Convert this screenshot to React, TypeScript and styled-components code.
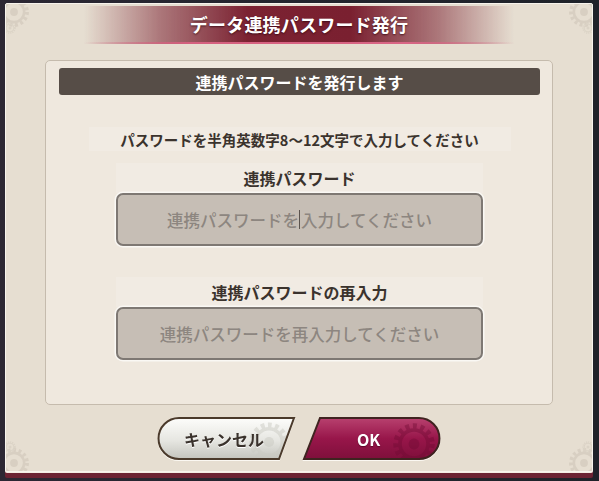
import { ReactElement } from 'react';
import styled, { createGlobalStyle } from 'styled-components';

const GlobalStyle = createGlobalStyle`
    html, body {
        margin: 0;
        padding: 0;
        background: #23252d;
        overflow: hidden;
    }
    body {
        font-family: 'Noto Sans CJK JP', 'Noto Sans', sans-serif;
    }
`;

// gear drawn as a dashed ring (teeth) + rim + hub
const Gear = ({ x, y, r, color }: { x: number; y: number; r: number; color: string }): ReactElement => (
    <g transform={`translate(${x} ${y})`}>
        <circle r={r} fill="none" stroke={color} strokeWidth={r * 0.3} strokeDasharray={`${r * 0.22} ${r * 0.2}`} />
        <circle r={r * 0.78} fill="none" stroke={color} strokeWidth={r * 0.2} />
        <circle r={r * 0.3} fill={color} />
    </g>
);

const CornerGear = ({ corner }: { corner: 'tl' | 'tr' | 'bl' | 'br' }): ReactElement => (
    <Corner $corner={corner} width="40" height="40" viewBox="0 0 40 40">
        <Gear x={corner.includes('l') ? 8 : 32} y={corner.includes('t') ? 8 : 32} r={13} color="#d8cfc2" />
        <Gear x={corner.includes('l') ? 4 : 36} y={corner.includes('t') ? 24 : 16} r={5} color="#dbd3c6" />
    </Corner>
);

const CancelShape = (): ReactElement => (
    <ButtonArt width="139" height="45" viewBox="0 0 139 45">
        <defs>
            <linearGradient id="cancelFill" x1="0" y1="0" x2="0" y2="1">
                <stop offset="0" stopColor="#fdfdfb" />
                <stop offset="0.55" stopColor="#e6e6e1" />
                <stop offset="1" stopColor="#c4c4bd" />
            </linearGradient>
            <clipPath id="cancelClip">
                <path d="M22 2 H137 L122 43 H22 A20.5 20.5 0 0 1 22 2 Z" />
            </clipPath>
        </defs>
        <path d="M22 2 H137 L122 43 H22 A20.5 20.5 0 0 1 22 2 Z" fill="url(#cancelFill)" />
        <g clipPath="url(#cancelClip)" opacity="0.5">
            <Gear x={112} y={26} r={17} color="#c9c9c2" />
        </g>
        <path d="M22 2 H137 L122 43 H22 A20.5 20.5 0 0 1 22 2 Z" fill="none" stroke="#4b3a2b" strokeWidth="2" />
    </ButtonArt>
);

const OkShape = (): ReactElement => (
    <ButtonArt width="139" height="45" viewBox="0 0 139 45">
        <defs>
            <linearGradient id="okFill" x1="0" y1="0" x2="0" y2="1">
                <stop offset="0" stopColor="#b8416f" />
                <stop offset="0.5" stopColor="#98164a" />
                <stop offset="1" stopColor="#7f0f3b" />
            </linearGradient>
            <clipPath id="okClip">
                <path d="M18 2 H117 A20.5 20.5 0 0 1 117 43 H2 Z" />
            </clipPath>
        </defs>
        <path d="M18 2 H117 A20.5 20.5 0 0 1 117 43 H2 Z" fill="url(#okFill)" />
        <g clipPath="url(#okClip)" opacity="0.4">
            <Gear x={112} y={28} r={18} color="#6e0a33" />
        </g>
        <path d="M18 2 H117 A20.5 20.5 0 0 1 117 43 H2 Z" fill="none" stroke="#3f2320" strokeWidth="2" />
    </ButtonArt>
);

const App = (): ReactElement => (
    <Stage>
        <GlobalStyle />
        <Dialog>
            <CornerGear corner="tl" />
            <CornerGear corner="tr" />
            <CornerGear corner="bl" />
            <CornerGear corner="br" />
            <TitleBanner>データ連携パスワード発行</TitleBanner>
            <Panel>
                <HeaderBar>連携パスワードを発行します</HeaderBar>
                <Instruction>パスワードを半角英数字8〜12文字で入力してください</Instruction>
                <Label>連携パスワード</Label>
                <Field>
                    連携パスワードを
                    <Caret />
                    入力してください
                </Field>
                <Label $gap={31}>連携パスワードの再入力</Label>
                <Field>連携パスワードを再入力してください</Field>
            </Panel>
            <Buttons>
                <Button $variant="cancel">
                    <CancelShape />
                    <ButtonText $variant="cancel">キャンセル</ButtonText>
                </Button>
                <Button $variant="ok">
                    <OkShape />
                    <ButtonText $variant="ok">OK</ButtonText>
                </Button>
            </Buttons>
        </Dialog>
    </Stage>
);

const Stage = styled.div`
    width: 599px;
    height: 481px;
    box-sizing: border-box;
    padding: 3px 6px 0 5px;
    background: linear-gradient(90deg, #2c2733 0%, #23252e 50%, #1f2229 100%);
`;

const Dialog = styled.div`
    position: relative;
    display: flex;
    flex-direction: column;
    align-items: center;
    box-sizing: border-box;
    width: 588px;
    height: 469px;
    background: #e6ded1;
    border: 1px solid #f7f3ec;
    border-radius: 2px;
    box-shadow: 0 1px 0 #f3ede3, 0 6px 0 #6c2333;
    overflow: hidden;
`;

const Corner = styled.svg<{ $corner: 'tl' | 'tr' | 'bl' | 'br' }>`
    position: absolute;
    ${(p) => (p.$corner.includes('t') ? 'top: 0;' : 'bottom: 0;')}
    ${(p) => (p.$corner.includes('l') ? 'left: 0;' : 'right: 0;')}
`;

const TitleBanner = styled.div`
    position: relative;
    display: flex;
    align-items: center;
    justify-content: center;
    width: 430px;
    height: 36px;
    margin-top: 2px;
    color: #fff;
    font-size: 18px;
    font-weight: 700;
    letter-spacing: 0.2px;
    text-shadow: 0 1px 2px rgba(40, 0, 10, 0.7);
    background: linear-gradient(
        90deg,
        rgba(122, 31, 48, 0) 0%,
        rgba(122, 31, 48, 0.55) 18%,
        #7b2232 38%,
        #7a2030 62%,
        rgba(122, 31, 48, 0.55) 82%,
        rgba(122, 31, 48, 0) 100%
    );
    border-bottom: 2px solid transparent;
    border-image: linear-gradient(
            90deg,
            rgba(214, 92, 126, 0) 0%,
            #d5607f 25%,
            #d96585 75%,
            rgba(214, 92, 126, 0) 100%
        )
        1;
`;

const Panel = styled.div`
    display: flex;
    flex-direction: column;
    align-items: center;
    box-sizing: border-box;
    width: 508px;
    height: 345px;
    margin-top: 16px;
    padding: 7px 12px 0 13px;
    background: #efe8de;
    border: 1px solid #c5bbad;
    border-radius: 5px;
`;

const HeaderBar = styled.div`
    align-self: stretch;
    display: flex;
    align-items: center;
    justify-content: center;
    height: 27px;
    background: #564d47;
    border-radius: 3px;
    color: #fff;
    font-size: 16px;
    font-weight: 700;
`;

const Instruction = styled.div`
    display: flex;
    align-items: center;
    justify-content: center;
    width: 422px;
    height: 24px;
    margin-top: 32px;
    background: #f1ebe3;
    color: #3b332d;
    font-size: 14.5px;
    font-weight: 700;
    white-space: nowrap;
`;

const Label = styled.div<{ $gap?: number }>`
    display: flex;
    align-items: center;
    justify-content: center;
    width: 367px;
    height: 30px;
    margin-top: ${(p) => p.$gap ?? 12}px;
    background: #f1ebe3;
    color: #3b332d;
    font-size: 16px;
    font-weight: 700;
`;

const Field = styled.div`
    display: flex;
    align-items: center;
    justify-content: center;
    box-sizing: border-box;
    width: 367px;
    height: 53px;
    margin-top: 0;
    background: #c6beb5;
    border: 2px solid #7e7873;
    border-radius: 7px;
    box-shadow: 0 0 0 1.5px #faf8f4;
    color: #8d8680;
    font-size: 16.5px;
    font-weight: 500;
    white-space: nowrap;
`;

const Caret = styled.span`
    display: inline-block;
    width: 1px;
    height: 19px;
    margin: 0 0.5px;
    background: #5a534d;
`;

const Buttons = styled.div`
    display: flex;
    gap: 6px;
    margin-top: 11px;
`;

const Button = styled.div<{ $variant: 'cancel' | 'ok' }>`
    position: relative;
    display: flex;
    align-items: center;
    width: 139px;
    height: 45px;
    padding-left: ${(p) => (p.$variant === 'cancel' ? '27px' : '55px')};
    box-sizing: border-box;
    filter: drop-shadow(0 1px 0 #fbf8f2);
    cursor: pointer;
`;

const ButtonArt = styled.svg`
    position: absolute;
    top: 0;
    left: 0;
`;

const ButtonText = styled.span<{ $variant: 'cancel' | 'ok' }>`
    position: relative;
    font-size: 16px;
    font-weight: 700;
    color: ${(p) => (p.$variant === 'cancel' ? '#3a322c' : '#fff')};
    text-shadow: ${(p) => (p.$variant === 'cancel' ? '0 1px 0 #fff' : '0 1px 1px rgba(60, 0, 20, 0.6)')};
`;

export default App;
